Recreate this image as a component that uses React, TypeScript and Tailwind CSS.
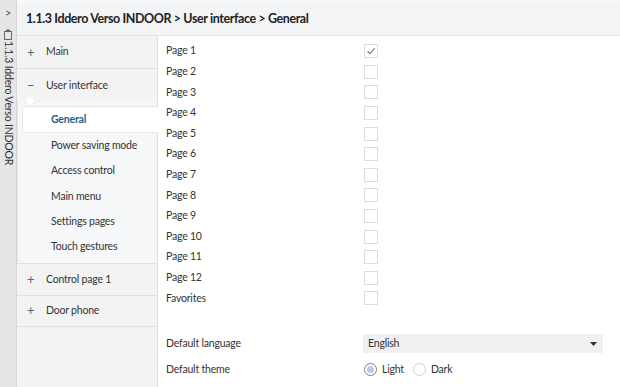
import React from "react";

const font = { fontFamily: 'Lato, "Open Sans", sans-serif' };

function Check({ checked }: { checked?: boolean }) {
  return (
    <div className="w-[14px] h-[14px] border border-[#dcdcdc] bg-white flex items-center justify-center">
      {checked && (
        <svg width="10" height="10" viewBox="0 0 10 10">
          <path d="M1.5 5.2 L4 7.6 L8.6 2.4" fill="none" stroke="#6a9a6a" strokeWidth="1.4" />
        </svg>
      )}
    </div>
  );
}

function Radio({ on }: { on?: boolean }) {
  return (
    <div
      className={
        "w-[13px] h-[13px] rounded-full border flex items-center justify-center " +
        (on ? "border-[#6d7f95] bg-white" : "border-[#cfcfcf] bg-white")
      }
    >
      {on && <div className="w-[7px] h-[7px] rounded-full bg-[#b8cbe3]" />}
    </div>
  );
}

export default function App() {
  const pages = [
    "Page 1",
    "Page 2",
    "Page 3",
    "Page 4",
    "Page 5",
    "Page 6",
    "Page 7",
    "Page 8",
    "Page 9",
    "Page 10",
    "Page 11",
    "Page 12",
    "Favorites",
  ];
  const subs = ["Power saving mode", "Access control", "Main menu", "Settings pages", "Touch gestures"];
  return (
    <div className="w-[620px] h-[387px] flex bg-white text-[#333] overflow-hidden tracking-[-0.2px]" style={font}>
      {/* left strip */}
      <div className="w-[17px] h-full bg-[#e6e6e6] border-r border-[#d6d6d6] flex flex-col items-center shrink-0">
        <div className="text-[11px] leading-none mt-[7px] text-[#555]">&gt;</div>
        <div className="mt-[11px] flex flex-col items-center">
          <svg width="10" height="11" viewBox="0 0 10 11" className="mb-[1px]">
            <rect x="1.5" y="2.5" width="7" height="8" fill="none" stroke="#666" />
            <rect x="3" y="0.5" width="4" height="2" fill="#666" />
          </svg>
          <div className="[writing-mode:vertical-rl] text-[10.5px] leading-[15px] text-[#333] whitespace-nowrap">
            1.1.3 Iddero Verso INDOOR
          </div>
        </div>
      </div>

      <div className="flex-1 flex flex-col">
        {/* header */}
        <div className="h-[36px] bg-[#f3f4f6] border-t-[3px] border-t-[#f8f9fa] border-b border-b-[#e2e3e5] flex items-center pl-[9px] shrink-0">
          <span className="text-[12.5px] font-bold text-[#222] tracking-[-0.4px]">
            1.1.3 Iddero Verso INDOOR &gt; User interface &gt; General
          </span>
        </div>

        <div className="flex-1 flex">
          {/* sidebar */}
          <div className="w-[141px] bg-[#f3f3f3] border-r border-[#dedede] flex flex-col text-[10.5px] shrink-0">
            <div className="h-[33px] border-b border-[#e0e0e0] flex items-center">
              <span className="w-[29px] pl-[10px] text-[13px] leading-none text-[#666]">+</span>
              <span>Main</span>
            </div>
            <div className="h-[33px] flex items-center">
              <span className="w-[29px] pl-[10px] text-[13px] leading-none text-[#666]">−</span>
              <span>User interface</span>
            </div>
            <div className="relative bg-[#f6f7f8] border-l border-[#e4e4e4] pt-[4px] pb-[3px]">
              <div className="absolute left-[8px] top-[-4px] w-[8px] h-[8px] bg-white border-l border-t border-[#e2e2e2] rotate-[225deg]" />
              <div className="relative h-[27px] ml-[4px] mr-[-1px] bg-white border-l border-t border-b border-[#e6e6e6] flex items-center pl-[28px] font-bold text-[#1f5f86]">
                General
              </div>
              {subs.map((s) => (
                <div key={s} className="h-[25.4px] flex items-center pl-[33px]">
                  {s}
                </div>
              ))}
            </div>
            <div className="h-[33px] border-t border-b border-[#e0e0e0] flex items-center">
              <span className="w-[29px] pl-[10px] text-[13px] leading-none text-[#666]">+</span>
              <span>Control page 1</span>
            </div>
            <div className="h-[31px] border-b border-[#e0e0e0] flex items-center">
              <span className="w-[29px] pl-[10px] text-[13px] leading-none text-[#666]">+</span>
              <span>Door phone</span>
            </div>
          </div>

          {/* content */}
          <div className="flex-1 pl-[8px] pt-[5px] text-[10.5px]">
            {pages.map((p, i) => (
              <div key={p} className="h-[20.6px] flex items-center">
                <span className="w-[198px]">{p}</span>
                <Check checked={i === 0} />
              </div>
            ))}
            <div className="h-[25px]" />
            <div className="h-[20px] flex items-center">
              <span className="w-[197px]">Default language</span>
              <div className="w-[240px] h-[19px] bg-[#f0f0f0] flex items-center justify-between pl-[5px] pr-[6px]">
                <span>English</span>
                <svg width="7" height="4" viewBox="0 0 7 4">
                  <path d="M0 0 L7 0 L3.5 4 Z" fill="#333" />
                </svg>
              </div>
            </div>
            <div className="h-[32px] flex items-center">
              <span className="w-[198px]">Default theme</span>
              <Radio on />
              <span className="ml-[5px]">Light</span>
              <div className="ml-[9px]">
                <Radio />
              </div>
              <span className="ml-[5px]">Dark</span>
            </div>
          </div>
        </div>
      </div>
    </div>
  );
}
